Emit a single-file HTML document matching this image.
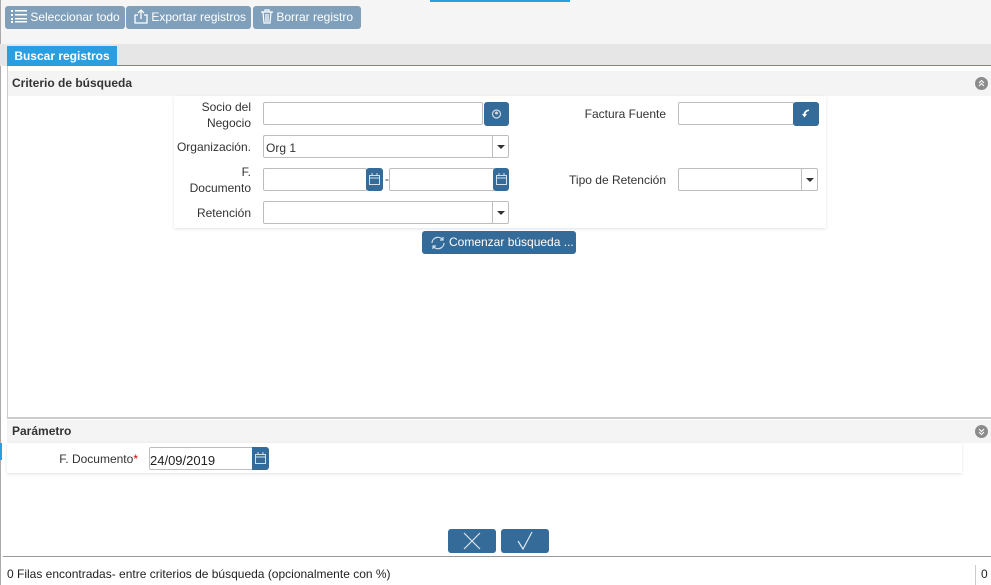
<!DOCTYPE html>
<html><head><meta charset="utf-8"><style>
*{box-sizing:border-box;margin:0;padding:0}
body{width:991px;height:585px;position:relative;background:#fff;font-family:"Liberation Sans",sans-serif;font-size:12px;color:#333;overflow:hidden}
.a{position:absolute}
.tb{background:#7f9fba;color:#fff;border-radius:3px;height:23px;top:6px;line-height:23px;font-size:12px}
.inp{position:absolute;border:1px solid #bdbdbd;background:#fff;height:23px;border-radius:2px}
.btn{position:absolute;background:#346b98;border-radius:3px}
.lbl{position:absolute;text-align:right;font-size:12px;color:#333;line-height:16px}
.dd{position:absolute;right:0;top:0;width:16px;height:21px;border-left:1px solid #bdbdbd}
.dd:after{content:"";position:absolute;left:4px;top:9px;border:4px solid transparent;border-top:4px solid #333;border-bottom:0}
.circ{position:absolute;width:13px;height:13px;border-radius:50%;background:#8b8b8b}
</style></head><body>
<div class="a" style="left:0;top:0;width:991px;height:44px;background:#f5f5f5"></div>
<div class="a" style="left:430px;top:0;width:140px;height:2px;background:#2a9ee0"></div>
<div class="a" style="left:0;top:0;width:1px;height:585px;background:#aaa"></div>
<div class="a tb" style="left:5px;width:120px;padding-left:6px"><svg width="16" height="14" style="vertical-align:-2px"><g fill="#fff"><rect x="0" y="1" width="2" height="2"/><rect x="0" y="5" width="2" height="2"/><rect x="0" y="9" width="2" height="2"/><rect x="0" y="12" width="2" height="2"/><rect x="4" y="1" width="12" height="1.5"/><rect x="4" y="5" width="12" height="1.5"/><rect x="4" y="9" width="12" height="1.5"/><rect x="4" y="12" width="12" height="1.5"/></g></svg> Seleccionar todo</div>
<div class="a tb" style="left:126px;width:125px;padding-left:8px"><svg width="14" height="15" style="vertical-align:-3px" fill="none" stroke="#fff" stroke-width="1.3"><path d="M4 6H1v8h12V6h-3M7 10V1M4 4l3-3 3 3"/></svg> Exportar registros</div>
<div class="a tb" style="left:253px;width:108px;padding-left:8px"><svg width="12" height="15" style="vertical-align:-3px" fill="none" stroke="#fff" stroke-width="1.2"><path d="M0 3h12M4 3V1h4v2M2 3l1 11h6l1-11M5 5v8M7 5v8"/></svg> Borrar registro</div>
<div class="a" style="left:0;top:44px;width:991px;height:22px;background:#e6e6e6"></div>
<div class="a" style="left:7px;top:46px;width:110px;height:20px;background:#2a9ee0;color:#fff;font-weight:bold;text-align:center;line-height:20px">Buscar registros</div>
<div class="a" style="left:7px;top:65px;width:984px;height:1px;background:#2a9ee0"></div>
<div class="a" style="left:7px;top:66px;width:1px;height:352px;background:#ccc"></div>
<div class="a" style="left:8px;top:71px;width:983px;height:25px;background:#f4f4f4;font-weight:bold;line-height:25px;padding-left:4px">Criterio de búsqueda</div>
<div class="circ" style="left:975px;top:77px"><svg width="13" height="13" fill="none" stroke="#fff" stroke-width="1"><path d="M4 6l2.5-2.5L9 6M4 9l2.5-2.5L9 9"/></svg></div>
<div class="a" style="left:174px;top:96px;width:652px;height:132px;background:#fff;box-shadow:0 1px 3px rgba(0,0,0,.12)"></div>
<div class="lbl" style="left:180px;top:99px;width:71px">Socio del<br>Negocio</div>
<div class="inp" style="left:263px;top:102px;width:220px"></div>
<div class="btn" style="left:484px;top:102px;width:25px;height:24px"><svg width="25" height="24"><circle cx="12.5" cy="12" r="4" fill="none" stroke="#cfd9e3" stroke-width="1.2"/><circle cx="12.5" cy="11" r="1.5" fill="#cfd9e3"/></svg></div>
<div class="lbl" style="left:170px;top:139px;width:81px">Organización.</div>
<div class="inp" style="left:263px;top:135px;width:246px;padding:5px 0 0 2px">Org 1<div class="dd"></div></div>
<div class="lbl" style="left:180px;top:164px;width:71px">F.<br>Documento</div>
<div class="inp" style="left:263px;top:168px;width:104px"></div>
<div class="btn" style="left:366px;top:168px;width:17px;height:23px"><svg width="17" height="23" fill="none" stroke="#cfe0ef"><rect x="3.5" y="7.5" width="10" height="9"/><path d="M3.5 10h10M6 5v3M11 5v3"/></svg></div>
<div class="a" style="left:385px;top:172px">-</div>
<div class="inp" style="left:389px;top:168px;width:106px"></div>
<div class="btn" style="left:493px;top:168px;width:16px;height:23px"><svg width="17" height="23" fill="none" stroke="#cfe0ef"><rect x="3.5" y="7.5" width="10" height="9"/><path d="M3.5 10h10M6 5v3M11 5v3"/></svg></div>
<div class="lbl" style="left:180px;top:205px;width:71px">Retención</div>
<div class="inp" style="left:263px;top:201px;width:246px"><div class="dd"></div></div>
<div class="lbl" style="left:570px;top:106px;width:96px">Factura Fuente</div>
<div class="inp" style="left:678px;top:102px;width:116px"></div>
<div class="btn" style="left:793px;top:102px;width:26px;height:24px"><svg width="26" height="24"><path d="M16 7.5c-3 0-5 2-5.5 4.5H9l2.5 3.5 2.5-3.5h-1.5c.3-1.5 1.5-2.8 3.5-3z" fill="#fff"/></svg></div>
<div class="lbl" style="left:560px;top:172px;width:106px">Tipo de Retención</div>
<div class="inp" style="left:678px;top:168px;width:140px"><div class="dd"></div></div>
<div class="btn" style="left:422px;top:231px;width:154px;height:23px;color:#fff;line-height:23px;padding-left:27px">Comenzar búsqueda ...</div>
<svg class="a" style="left:429px;top:234px" width="18" height="18" fill="none" stroke="#cfe0ef" stroke-width="1.2"><path d="M3 9a6 6 0 0 1 11-3M15 9a6 6 0 0 1-11 3M14 3v3h-3M4 15v-3h3"/></svg>
<div class="a" style="left:7px;top:417px;width:984px;height:2px;background:#ccc"></div>
<div class="a" style="left:7px;top:420px;width:984px;height:23px;background:#f4f4f4;font-weight:bold;line-height:23px;padding-left:5px">Parámetro</div>
<div class="circ" style="left:975px;top:425px"><svg width="13" height="13" fill="none" stroke="#fff" stroke-width="1"><path d="M4 4l2.5 2.5L9 4M4 7l2.5 2.5L9 7"/></svg></div>
<div class="a" style="left:0;top:443px;width:2px;height:17px;background:#2a9ee0"></div>
<div class="a" style="left:7px;top:443px;width:955px;height:30px;background:#fff;box-shadow:0 1px 3px rgba(0,0,0,.12)"></div>
<div class="lbl" style="left:40px;top:451px;width:98px">F. Documento<span style="color:#d00">*</span></div>
<div class="inp" style="left:149px;top:447px;width:105px;padding:5px 0 0 0;font-size:13px;color:#222">24/09/2019</div>
<div class="btn" style="left:252px;top:447px;width:17px;height:23px;border-radius:0 3px 3px 0"><svg width="17" height="23" fill="none" stroke="#cfe0ef"><rect x="3.5" y="7.5" width="10" height="9"/><path d="M3.5 10h10M6 5v3M11 5v3"/></svg></div>
<div class="btn" style="left:448px;top:529px;width:48px;height:24px"><svg width="48" height="24" stroke="#dce7f1" stroke-width="1.2"><path d="M16 4l16 16M32 4L16 20"/></svg></div>
<div class="btn" style="left:501px;top:529px;width:48px;height:24px"><svg width="48" height="24" fill="none" stroke="#dce7f1" stroke-width="1.2"><path d="M17 12l5 8 9-17"/></svg></div>
<div class="a" style="left:3px;top:556px;width:988px;height:1px;background:#999"></div>
<div class="a" style="left:7px;top:567px;font-size:12px;color:#222">0 Filas encontradas- entre criterios de búsqueda (opcionalmente con %)</div>
<div class="a" style="left:975px;top:565px;width:1px;height:20px;background:#ccc"></div>
<div class="a" style="left:981px;top:567px;color:#222">0</div>
</body></html>
